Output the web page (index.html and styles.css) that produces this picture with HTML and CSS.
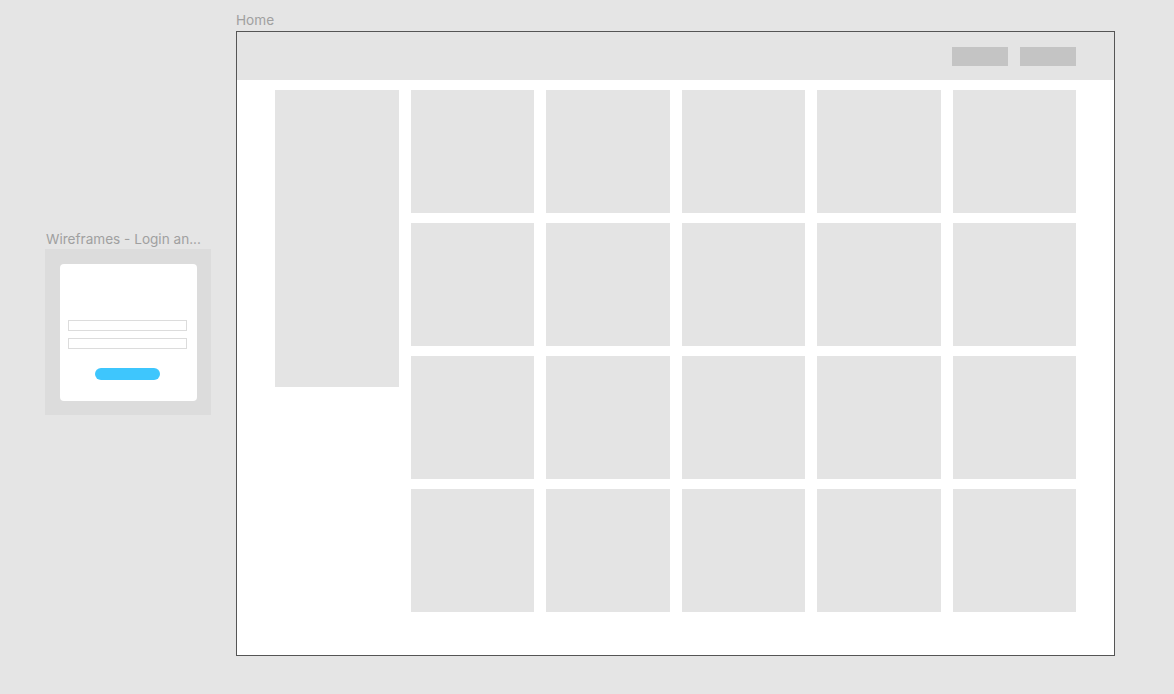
FILE: index.html
```html
<!DOCTYPE html>
<html lang="en">
<head>
    <meta charset="UTF-8">
    <meta name="viewport" content="width=device-width, initial-scale=1.0">
    <title>Wireframes</title>
    <link rel="stylesheet" href="styles.css">
</head>
<body>
    <div class="canvas">
        <div class="thumb-group">
            <div class="frame-label">Wireframes - Login an...</div>
            <div class="thumb">
                <div class="login-card">
                    <div class="login-input"></div>
                    <div class="login-input"></div>
                    <div class="login-button"></div>
                </div>
            </div>
        </div>

        <div class="home-group">
            <div class="frame-label">Home</div>
            <div class="home-frame">
                <div class="home-header">
                    <div class="header-button"></div>
                    <div class="header-button"></div>
                </div>
                <div class="home-body">
                    <div class="sidebar"></div>
                    <div class="card-grid">
                        <div class="card"></div>
                        <div class="card"></div>
                        <div class="card"></div>
                        <div class="card"></div>
                        <div class="card"></div>
                        <div class="card"></div>
                        <div class="card"></div>
                        <div class="card"></div>
                        <div class="card"></div>
                        <div class="card"></div>
                        <div class="card"></div>
                        <div class="card"></div>
                        <div class="card"></div>
                        <div class="card"></div>
                        <div class="card"></div>
                        <div class="card"></div>
                        <div class="card"></div>
                        <div class="card"></div>
                        <div class="card"></div>
                        <div class="card"></div>
                    </div>
                </div>
            </div>
        </div>
    </div>
</body>
</html>
```

FILE: styles.css
```css
body {
    margin: 0;
    padding: 0;
    background-color: #e5e5e5;
    font-family: Inter, "Liberation Sans", sans-serif;
}

.canvas {
    display: flex;
    align-items: flex-start;
    padding-left: 45px;
}

.frame-label {
    font-size: 13.6px;
    line-height: 16px;
    color: #a0a0a0;
    white-space: nowrap;
}

/* login thumbnail */
.thumb-group {
    width: 166px;
    margin-top: 231px;
}

.thumb-group .frame-label {
    margin-left: 1px;
    margin-bottom: 2px;
}

.thumb {
    width: 166px;
    height: 166px;
    padding: 15px 14px 14px 15px;
    box-sizing: border-box;
    background-color: #dcdcdc;
}

.login-card {
    height: 137px;
    background-color: #fff;
    border-radius: 4px;
    padding: 56px 0 0 8px;
    box-sizing: border-box;
    display: flex;
    flex-direction: column;
    align-items: flex-start;
}

.login-input {
    width: 119px;
    height: 11px;
    box-sizing: border-box;
    border: 1px solid #dcdcdc;
    margin-bottom: 7px;
}

.login-button {
    width: 65px;
    height: 12px;
    margin: 12px 0 0 27px;
    border-radius: 6px;
    background-color: #3ec6fd;
}

/* home frame */
.home-group {
    margin-left: 25px;
    margin-top: 12px;
}

.home-group .frame-label {
    margin-bottom: 3px;
}

.home-frame {
    width: 879px;
    height: 625px;
    box-sizing: border-box;
    border: 1px solid #555;
    background-color: #fff;
}

.home-header {
    height: 48px;
    background-color: #e4e4e4;
    display: flex;
    justify-content: flex-end;
    align-items: center;
    gap: 12px;
    padding-right: 38px;
}

.header-button {
    width: 56px;
    height: 19px;
    background-color: #c4c4c4;
}

.home-body {
    display: flex;
    align-items: flex-start;
    gap: 12px;
    padding: 10px 38px 0 38px;
}

.sidebar {
    width: 123.5px;
    height: 297px;
    background-color: #e4e4e4;
}

.card-grid {
    display: grid;
    grid-template-columns: repeat(5, 123.5px);
    grid-auto-rows: 122.5px;
    column-gap: 12px;
    row-gap: 10.5px;
}

.card {
    background-color: #e4e4e4;
}
```
